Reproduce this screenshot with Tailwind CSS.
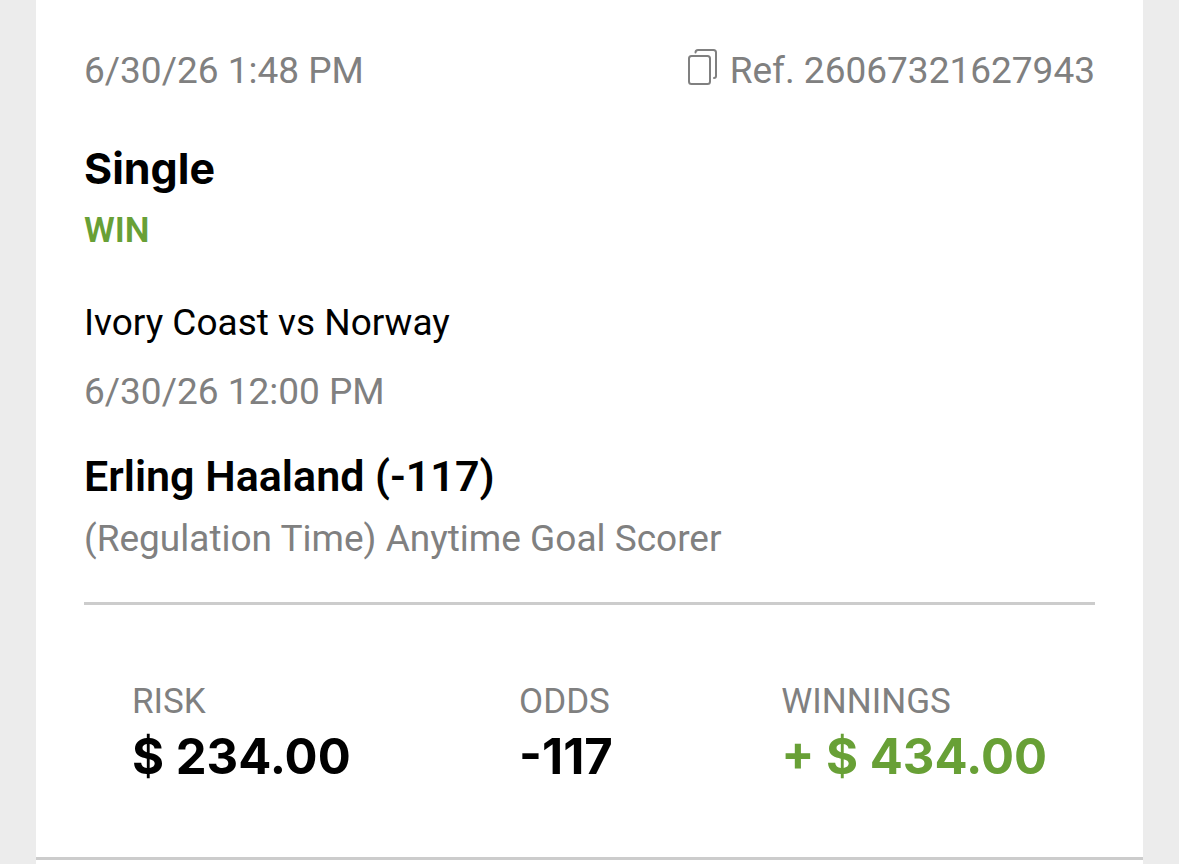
<!DOCTYPE html>
<html lang="en">

<head>
    <title>Bet details</title>
    <meta charset="utf-8">
    <meta name="viewport" content="width=device-width, initial-scale=1.0">
    <script src="https://cdn.jsdelivr.net/npm/@tailwindcss/browser@4"></script>
</head>

<body class="bg-[#ececec] px-9 font-['Roboto','Noto_Sans',sans-serif] text-[37px] leading-[46px] text-[#808080]">
    <main class="min-h-screen bg-white">
        <article class="border-b-3 border-[#cccccc] px-12 pt-12 pb-[68px]">
            <!-- Date and reference -->
            <header class="flex items-start justify-between">
                <time>6/30/26 1:48 PM</time>
                <div class="flex items-start gap-3">
                    <button type="button" aria-label="Copy reference" class="cursor-pointer">
                        <svg class="h-[38px] w-8" viewBox="0 0 32 38" fill="none" stroke="currentColor" stroke-width="2" stroke-linecap="round">
                            <rect x="3" y="8" width="21" height="28" rx="2.5" />
                            <path d="M9.500 4.500Q9.500 2 12 2H27.500Q30 2 30 4.500V28Q30 30 28 30" />
                        </svg>
                    </button>
                    <span>Ref. 26067321627943</span>
                </div>
            </header>
            <!-- Bet type and result -->
            <h1 class="mt-12 font-['Inter',sans-serif] text-[43px] leading-[52px] font-bold text-black">Single</h1>
            <p class="mt-[14px] text-[35px] font-semibold text-[#68a036]">WIN</p>
            <!-- Selection -->
            <p class="mt-[46px] text-black">Ivory Coast vs Norway</p>
            <time class="mt-[23px] block">6/30/26 12:00 PM</time>
            <h2 class="mt-[35px] text-[43px] leading-[52px] font-semibold text-black">Erling Haaland (-117)</h2>
            <p class="mt-[14px]">(Regulation Time) Anytime Goal Scorer</p>
            <hr class="mt-10 border-t-3 border-[#cccccc]">
            <!-- Amounts -->
            <dl class="mt-[74px] flex justify-between px-12">
                <div>
                    <dt class="text-[35px]">RISK</dt>
                    <dd class="font-['Inter',sans-serif] text-[49px] leading-[64px] font-bold text-black">$ 234.00</dd>
                </div>
                <div>
                    <dt class="text-[35px]">ODDS</dt>
                    <dd class="font-['Inter',sans-serif] text-[49px] leading-[64px] font-bold text-black">-117</dd>
                </div>
                <div>
                    <dt class="text-[35px]">WINNINGS</dt>
                    <dd class="font-['Inter',sans-serif] text-[49px] leading-[64px] font-bold text-[#68a036]">+ $ 434.00</dd>
                </div>
            </dl>
        </article>
    </main>
</body>

</html>
